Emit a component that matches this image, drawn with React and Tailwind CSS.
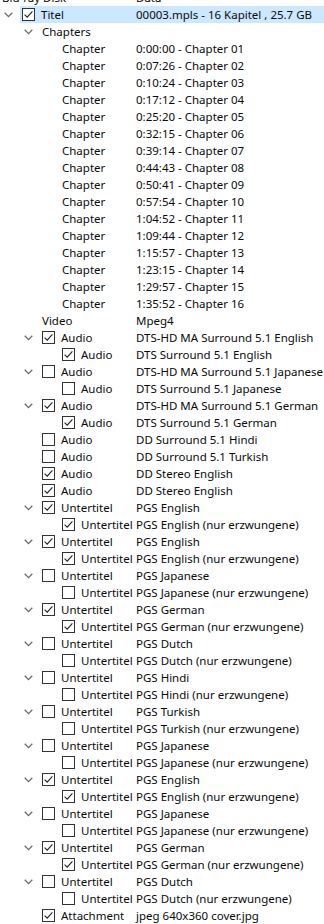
import React from "react";

const chapters = [
  "0:00:00","0:07:26","0:10:24","0:17:12","0:25:20","0:32:15","0:39:14","0:44:43",
  "0:50:41","0:57:54","1:04:52","1:09:44","1:15:57","1:23:15","1:29:57","1:35:52",
];

const rows = [];
rows.push({ level: 0, chev: true, cb: true, checked: true, label: "Titel", value: "00003.mpls - 16 Kapitel , 25.7 GB", sel: true });
rows.push({ level: 1, chev: true, label: "Chapters", value: "" });
chapters.forEach((t, i) =>
  rows.push({ level: 2, label: "Chapter", value: `${t} - Chapter ${String(i + 1).padStart(2, "0")}` })
);
rows.push({ level: 1, label: "Video", value: "Mpeg4" });
const audio = [
  ["DTS-HD MA Surround 5.1 English", true, "DTS Surround 5.1 English", true],
  ["DTS-HD MA Surround 5.1 Japanese", false, "DTS Surround 5.1 Japanese", false],
  ["DTS-HD MA Surround 5.1 German", true, "DTS Surround 5.1 German", true],
];
audio.forEach(([a, ac, b, bc]) => {
  rows.push({ level: 1, chev: true, cb: true, checked: ac, label: "Audio", value: a });
  rows.push({ level: 2, cb: true, checked: bc, label: "Audio", value: b });
});
rows.push({ level: 1, cb: true, checked: false, label: "Audio", value: "DD Surround 5.1 Hindi" });
rows.push({ level: 1, cb: true, checked: false, label: "Audio", value: "DD Surround 5.1 Turkish" });
rows.push({ level: 1, cb: true, checked: true, label: "Audio", value: "DD Stereo English" });
rows.push({ level: 1, cb: true, checked: true, label: "Audio", value: "DD Stereo English" });
const subs = [
  ["English", true], ["English", true], ["Japanese", false], ["German", true],
  ["Dutch", false], ["Hindi", false], ["Turkish", false], ["Japanese", false],
  ["English", true], ["Japanese", false], ["German", true], ["Dutch", false],
];
subs.forEach(([l, c]) => {
  rows.push({ level: 1, chev: true, cb: true, checked: c, label: "Untertitel", value: `PGS ${l}` });
  rows.push({ level: 2, cb: true, checked: c, label: "Untertitel", value: `PGS ${l} (nur erzwungene)` });
});
rows.push({ level: 1, cb: true, checked: true, label: "Attachment", value: "jpeg 640x360 cover.jpg" });

const indent = { 0: "pl-0", 1: "pl-[20px]", 2: "pl-[40px]" };
const labelW = { 0: "w-[116px]", 1: "w-[96px]", 2: "w-[76px]" };

function Chevron() {
  return (
    <svg width="9" height="6" viewBox="0 0 9 6" className="block">
      <path d="M0.7 0.8 L4.5 4.6 L8.3 0.8" fill="none" stroke="#6d6d6d" strokeWidth="1.3" />
    </svg>
  );
}

function Check({ checked }) {
  return (
    <svg width="13" height="13" viewBox="0 0 13 13" className="block shrink-0">
      <rect x="0.5" y="0.5" width="12" height="12" fill="#fff" stroke="#333" />
      {checked && (
        <path d="M2.6 6.6 L5.2 9.2 L10.4 3.4" fill="none" stroke="#222" strokeWidth="1.1" />
      )}
    </svg>
  );
}

function Row({ r }) {
  return (
    <div className={`flex h-[17px] items-center ${indent[r.level]}`}>
      <div className="flex w-[20px] shrink-0 items-center pl-[4px]">{r.chev && <Chevron />}</div>
      <div className={`flex h-[17px] flex-1 items-center ${r.sel ? "bg-[#cce8ff]" : ""}`}>
        <div className={`flex shrink-0 items-center pl-[2px] ${labelW[r.level]}`}>
          {r.cb && <Check checked={r.checked} />}
          <span className={`whitespace-nowrap ${r.cb ? "ml-[6px]" : ""}`}>{r.label}</span>
        </div>
        <span className="whitespace-nowrap">{r.value}</span>
      </div>
    </div>
  );
}

export default function App() {
  return (
    <div
      className="h-[924px] w-[324px] overflow-hidden bg-white text-[11.5px] leading-[17px] text-[#0a0a0a]"
      style={{ fontFamily: '"Noto Sans", "Open Sans", sans-serif' }}
    >
      <div className="-mt-[11px]">
        <div className="flex h-[17px] items-center">
          <span className="w-[136px] pl-[2px] whitespace-nowrap">Blu-ray Disk</span>
          <span>Data</span>
        </div>
        {rows.map((r, i) => (
          <Row key={i} r={r} />
        ))}
      </div>
    </div>
  );
}
